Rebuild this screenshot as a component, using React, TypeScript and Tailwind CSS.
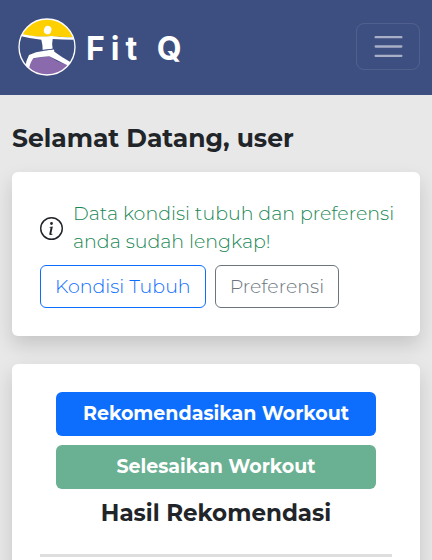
import type { ReactNode } from "react";

function Logo() {
  return (
    <svg viewBox="12 15 174 174" className="size-[58px]" aria-hidden="true">
      <defs>
        <clipPath id="disc">
          <circle cx="99" cy="102" r="84" />
        </clipPath>
      </defs>
      <g clipPath="url(#disc)">
        <path d="M24 66 Q46 15 99 15 Q154 15 178 74 L136 71 L72 71 Z" fill="#ffd000" />
        <path d="M38 172 L53 138 Q78 132 106 130 L128 144 L166 158 Q146 189 99 189 Q60 189 38 172 Z" fill="#8b69ad" />
        <path
          d="M24 64 L58 69 Q84 72 112 69 Q140 73 178 73 L178 80 Q146 80 116 78 Q113 92 116 107 L86 111 Q86 94 82 80 Q52 78 22 70 Z"
          fill="#fff"
        />
        <path
          d="M88 113 L120 109 L121 116 Q143 132 170 148 L166 160 Q134 144 106 130 Q80 132 58 136 Q46 152 45 172 L33 166 Q36 142 45 126 Q66 116 88 114 Z"
          fill="#fff"
        />
        <path d="M86 112 L121 108" stroke="#3d4e80" strokeWidth="2" />
      </g>
      <ellipse cx="101" cy="51" rx="11" ry="13" transform="rotate(18 101 51)" fill="#fff" />
      <circle cx="99" cy="102" r="84" fill="none" stroke="#fff" strokeWidth="4" />
    </svg>
  );
}

function InfoIcon() {
  return (
    <svg viewBox="0 0 16 16" className="size-[23px] shrink-0" fill="currentColor" aria-hidden="true">
      <path d="M8 15A7 7 0 1 1 8 1a7 7 0 0 1 0 14m0 1A8 8 0 1 0 8 0a8 8 0 0 0 0 16" />
      <path d="m8.93 6.588-2.29.287-.082.38.45.083c.294.07.352.176.288.469l-.738 3.468c-.194.897.105 1.319.808 1.319.545 0 1.178-.252 1.465-.598l.088-.416c-.2.176-.492.246-.686.246-.275 0-.375-.193-.304-.533zM9 4.5a1 1 0 1 1-2 0 1 1 0 0 1 2 0" />
    </svg>
  );
}

function Card({ children }: { children: ReactNode }) {
  return (
    <section className="rounded-md bg-white py-7 shadow-[0_9px_19px_rgba(0,0,0,0.15)]">{children}</section>
  );
}

export default function App() {
  return (
    <div className="min-h-screen bg-[#e8e8e8] font-[Montserrat,Inter,sans-serif] text-[19px]/7 text-[#212529]">
      <header className="flex h-[95px] items-center justify-between bg-[#3d4e80] px-3 pb-[2px]">
        <a href="#" className="flex items-center gap-[10px] pl-1.5 text-white">
          <Logo />
          <span className="pt-1 font-[Inter,sans-serif] text-[32px]/10 font-bold tracking-[6px]">Fit Q</span>
        </a>
        <button
          type="button"
          aria-label="Menu"
          className="flex h-[47px] w-16 items-center justify-center rounded-lg border border-white/10 text-white/55"
        >
          <svg viewBox="0 0 30 30" className="size-[35px]" stroke="currentColor" strokeWidth="2" strokeLinecap="round" aria-hidden="true">
            <path d="M4 7h22M4 15h22M4 23h22" />
          </svg>
        </button>
      </header>

      <main className="px-3 pt-[27px]">
        <h1 className="mb-[18px] text-[25px]/8 font-bold">Selamat Datang, user</h1>
        <div className="flex flex-col gap-7">
          <Card>
            <div className="mb-[9px] flex items-center gap-[10px] pr-5 pl-7">
              <InfoIcon />
              <p className="font-light text-[#198754]">Data kondisi tubuh dan preferensi anda sudah lengkap!</p>
            </div>
            <div className="flex gap-[9px] px-7">
              <button type="button" className="h-[43px] rounded-md border border-[#0d6efd] px-[14px] font-light text-[#0d6efd]">
                Kondisi Tubuh
              </button>
              <button type="button" className="h-[43px] rounded-md border border-[#6c757d] px-[14px] font-light text-[#6c757d]">
                Preferensi
              </button>
            </div>
          </Card>
          <Card>
            <div className="flex flex-col gap-[9px] px-11">
              <button type="button" className="h-11 rounded-md bg-[#0d6efd] font-bold text-white">
                Rekomendasikan Workout
              </button>
              <button type="button" disabled className="h-11 rounded-md bg-[#6ab092] font-bold text-white">
                Selesaikan Workout
              </button>
            </div>
            <h2 className="mt-2 text-center text-[23px]/8 font-bold">Hasil Rekomendasi</h2>
            <hr className="mx-7 mt-[25px] border-t-[3px] border-[#dedede]" />
          </Card>
        </div>
      </main>
    </div>
  );
}
